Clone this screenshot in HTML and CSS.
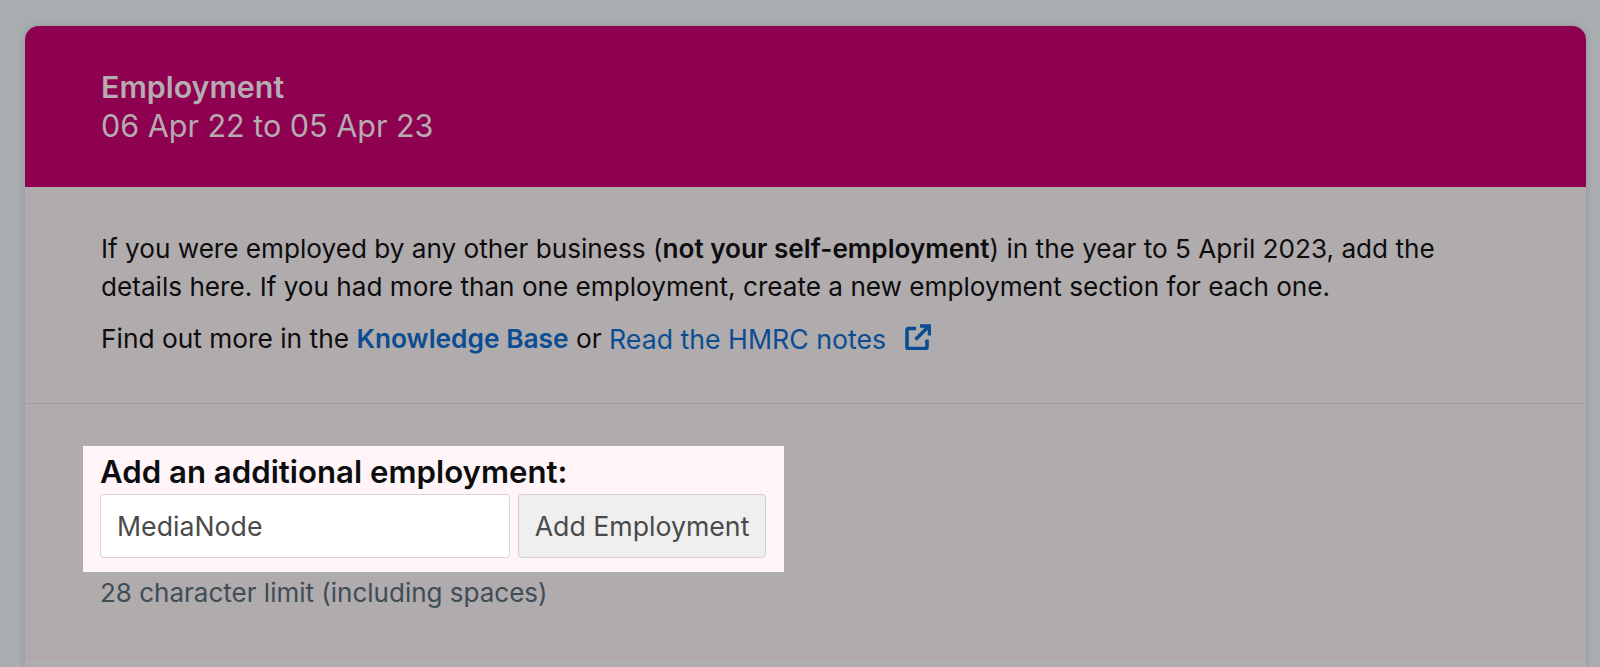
FILE: index.html
```html
<!DOCTYPE html>
<html lang="en">
<head>
<meta charset="utf-8">
<title>Employment</title>
<link rel="stylesheet" href="styles.css">
</head>
<body>
<main class="card">
  <header class="card-head">
    <h1 class="card-title">Employment</h1>
    <p class="card-dates">06 Apr 22 to 05 Apr 23</p>
  </header>
  <section class="intro">
    <p class="intro-text">If you were employed by any other business (<strong>not your self-employment</strong>) in the year to 5 April 2023, add the details here. If you had more than one employment, create a new employment section for each one.</p>
    <p class="intro-links">Find out more in the <a class="link-strong" href="#">Knowledge Base</a> or <a class="link" href="#">Read the HMRC notes</a>
      <svg class="ext-icon" viewBox="0 0 26 26" aria-hidden="true"><path d="M11 4.500H3.500a1.500 1.500 0 0 0-1.500 1.500v17a1.500 1.500 0 0 0 1.500 1.500h17a1.500 1.500 0 0 0 1.500-1.500v-7.500M10.500 15.500 23 3M15 2h9.500v9.500" fill="none" stroke="currentColor" stroke-width="3.600"/></svg>
    </p>
  </section>
  <section class="add">
    <div class="highlight">
      <label class="add-label" for="emp">Add an additional employment:</label>
      <div class="add-row">
        <input class="add-input" id="emp" type="text" value="MediaNode">
        <button class="add-btn" type="button">Add Employment</button>
      </div>
    </div>
    <p class="add-hint">28 character limit (including spaces)</p>
  </section>
  <div class="card-rest"></div>
</main>
</body>
</html>
```
FILE: styles.css
```css
* { box-sizing: border-box; }
html, body { height: 100%; }
body {
  margin: 0;
  padding: 26px 14px 0 25px;
  background: #a9adb0;
  font-family: Inter, "Liberation Sans", sans-serif;
  color: #0d0d0f;
  overflow: hidden;
}
.card {
  background: #b0abad;
  border-radius: 14px 14px 0 0;
  box-shadow: 0 0 6px rgba(120, 125, 130, .45);
}
.card-head {
  height: 161px;
  padding: 41px 76px 0;
  background: #8e0050;
  border-radius: 14px 14px 0 0;
  color: #b5abb0;
}
.card-title { margin: 0; font-size: 30.4px; line-height: 40px; font-weight: 600; }
.card-dates { margin: 0; font-size: 30.5px; line-height: 38px; }
.intro {
  height: 217px;
  padding: 43px 76px 0;
  border-bottom: 1px solid #ab98a2;
}
.intro-text { margin: 0; max-width: 1345px; font-size: 26.150px; line-height: 38px; }
.intro-links { margin: 14px 0 0; font-size: 26.300px; line-height: 38px; display: flex; align-items: center; white-space: pre; }
.intro-text strong { font-weight: 600; }
.link-strong { color: #0b4d92; font-weight: 600; text-decoration: none; }
.link { color: #0b4d92; font-size: 26.700px; text-decoration: none; }
.ext-icon { width: 26px; height: 26px; margin: -4px 0 0 19px; color: #0b4d92; }
.add {
  height: 254px;
  padding: 42px 0 0 58px;
  border-bottom: 1px solid #b89ca8;
}
.highlight {
  width: 701px;
  height: 126px;
  padding: 8px 18px 0 17px;
  background: #fff5f8;
}
.add-label { display: block; margin-bottom: 4px; font-size: 31.200px; line-height: 36px; font-weight: 600; white-space: nowrap; }
.add-row { display: flex; gap: 8px; }
.add-input {
  width: 410px;
  height: 64px;
  padding: 0 16px;
  background: #fff;
  border: 1px solid #d8d6d8;
  border-radius: 4px;
  font: 26.700px Inter, "Liberation Sans", sans-serif;
  color: #4a4a4a;
}
.add-btn {
  width: 248px;
  height: 64px;
  padding: 0;
  background: #efefef;
  border: 1px solid #d0d0d0;
  border-radius: 4px;
  font: 26.700px Inter, "Liberation Sans", sans-serif;
  color: #4a4a4a;
}
.add-hint { margin: 3px 0 0 17px; font-size: 26px; line-height: 36px; color: #3f4d55; }
.card-rest { height: 20px; background: #aeacad; }
```
